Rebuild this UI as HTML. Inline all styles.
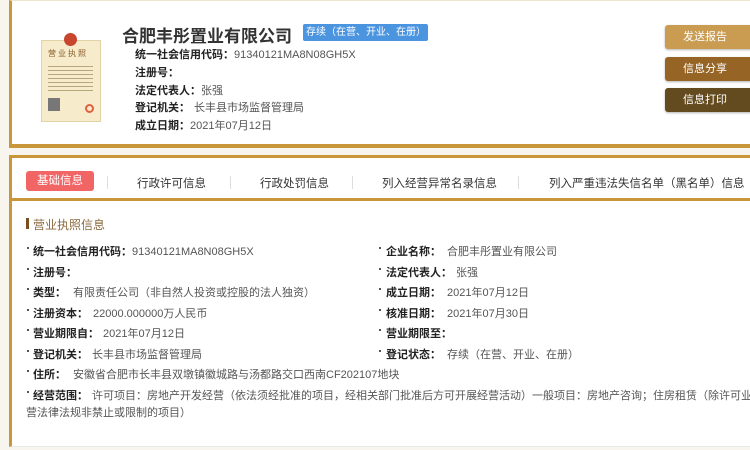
<!DOCTYPE html>
<html><head><meta charset="utf-8"><style>
*{margin:0;padding:0;box-sizing:border-box}
body{width:750px;height:450px;overflow:hidden;background:#f8f5ee;font-family:"Liberation Sans","Noto Sans CJK SC",sans-serif;font-size:11px;color:#333;position:relative}
.wrap{position:absolute;left:0;top:0;width:750px;height:450px;overflow:hidden}
.a{position:absolute;white-space:nowrap}
.card1{position:absolute;left:9px;top:0;width:745px;height:148px;background:#fff;border-left:3px solid #c9973a;border-bottom:4px solid #c9973a;border-top:1px solid #eee3cc}
.card2{position:absolute;left:9px;top:155px;width:745px;height:292px;background:#fff;border-left:3px solid #c9973a;border-top:3px solid #c9973a;border-bottom:1px solid #e8e8e8}
.tabline{position:absolute;left:12px;top:198px;width:740px;height:3px;background:#c9973a}
b{font-weight:bold;color:#222}
.v{color:#555}
.btn{position:absolute;left:665px;width:90px;height:24px;border-radius:3px;color:#fff;font-size:11px;line-height:24px;padding-left:18px;box-shadow:0 1px 2px rgba(0,0,0,.3)}
.sep{position:absolute;top:176px;width:1px;height:13px;background:#ddd}
.dot{position:absolute;width:2px;height:2px;background:#555}
.tab{font-size:11.5px;color:#333}
</style></head><body><div class="wrap">
<div class="card1"></div>
<div class="a" style="left:41px;top:40px;width:60px;height:82px;background:#f6eccb;border:1px solid #e2d3a6"></div>
<div class="a" style="left:64px;top:33px;width:13px;height:13px;border-radius:50%;background:#c8462e"></div>
<div class="a" style="left:48px;top:48px;font-size:8px;color:#8a5a2a;letter-spacing:2px">营业执照</div>
<div class="a" style="left:48px;top:64px;width:45px;height:28px;background:repeating-linear-gradient(#f6eccb 0 2px,#b8a77a 2px 3px,#f6eccb 3px 4px)"></div>
<div class="a" style="left:48px;top:98px;width:12px;height:13px;background:#777"></div>
<div class="a" style="left:85px;top:104px;width:9px;height:9px;border-radius:50%;border:2px solid #e06040"></div>

<div class="a" style="left:122px;top:22px;font-size:17px;font-weight:bold;color:#333">合肥丰彤置业有限公司</div>
<div class="a" style="left:303px;top:24px;width:125px;height:17px;background:#4a94e0;border-radius:2px;color:#fff;font-size:10px;line-height:17px;padding-left:3px">存续（在营、开业、在册）</div>
<div class="a" style="left:135px;top:46px"><b>统一社会信用代码：</b><span class="v">91340121MA8N08GH5X</span></div>
<div class="a" style="left:135px;top:64px"><b>注册号：</b></div>
<div class="a" style="left:135px;top:82px"><b>法定代表人：</b><span class="v">张强</span></div>
<div class="a" style="left:135px;top:99px"><b>登记机关：</b><span class="v" style="margin-left:4px">长丰县市场监督管理局</span></div>
<div class="a" style="left:135px;top:117px"><b>成立日期：</b><span class="v">2021年07月12日</span></div>
<div class="btn" style="top:25px;background:#c99c52">发送报告</div>
<div class="btn" style="top:57px;background:#966526">信息分享</div>
<div class="btn" style="top:88px;background:#634b1f">信息打印</div>

<div class="card2"></div>
<div class="tabline"></div>
<div class="a" style="left:26px;top:171px;width:68px;height:20px;background:#f26565;border-radius:3px;color:#fff;line-height:20px;text-align:center;font-size:11.5px">基础信息</div>
<div class="sep" style="left:107px"></div>
<div class="a tab" style="left:137px;top:175px">行政许可信息</div>
<div class="sep" style="left:230px"></div>
<div class="a tab" style="left:260px;top:175px">行政处罚信息</div>
<div class="sep" style="left:352px"></div>
<div class="a tab" style="left:382px;top:175px">列入经营异常名录信息</div>
<div class="sep" style="left:518px"></div>
<div class="a tab" style="left:549px;top:175px">列入严重违法失信名单（黑名单）信息</div>

<div class="a" style="left:26px;top:218px;width:3px;height:11px;background:#7a4f1e"></div>
<div class="a" style="left:33px;top:216px;color:#8b6a3e;font-size:12px">营业执照信息</div>

<div class="dot" style="left:27px;top:247px"></div><div class="a" style="left:33px;top:243px"><b>统一社会信用代码：</b><span class="v">91340121MA8N08GH5X</span></div>
<div class="dot" style="left:27px;top:268px"></div><div class="a" style="left:33px;top:264px"><b>注册号：</b></div>
<div class="dot" style="left:27px;top:288px"></div><div class="a" style="left:33px;top:284px"><b>类型：</b><span class="v" style="margin-left:7px">有限责任公司（非自然人投资或控股的法人独资）</span></div>
<div class="dot" style="left:27px;top:309px"></div><div class="a" style="left:33px;top:305px"><b>注册资本：</b><span class="v" style="margin-left:5px">22000.000000万人民币</span></div>
<div class="dot" style="left:27px;top:329px"></div><div class="a" style="left:33px;top:325px"><b>营业期限自：</b><span class="v" style="margin-left:4px">2021年07月12日</span></div>
<div class="dot" style="left:27px;top:350px"></div><div class="a" style="left:33px;top:346px"><b>登记机关：</b><span class="v" style="margin-left:4px">长丰县市场监督管理局</span></div>
<div class="dot" style="left:27px;top:370px"></div><div class="a" style="left:33px;top:366px"><b>住所：</b><span class="v" style="margin-left:7px">安徽省合肥市长丰县双墩镇徽城路与汤都路交口西南CF202107地块</span></div>
<div class="dot" style="left:27px;top:391px"></div><div class="a" style="left:33px;top:387px"><b>经营范围：</b><span class="v" style="margin-left:4px">许可项目：房地产开发经营（依法须经批准的项目，经相关部门批准后方可开展经营活动）一般项目：房地产咨询；住房租赁（除许可业务外，可自主依法经</span></div>
<div class="a" style="left:26px;top:404px"><span class="v">营法律法规非禁止或限制的项目）</span></div>

<div class="dot" style="left:379px;top:247px"></div><div class="a" style="left:386px;top:243px"><b>企业名称：</b><span class="v" style="margin-left:6px">合肥丰彤置业有限公司</span></div>
<div class="dot" style="left:379px;top:268px"></div><div class="a" style="left:386px;top:264px"><b>法定代表人：</b><span class="v" style="margin-left:4px">张强</span></div>
<div class="dot" style="left:379px;top:288px"></div><div class="a" style="left:386px;top:284px"><b>成立日期：</b><span class="v" style="margin-left:6px">2021年07月12日</span></div>
<div class="dot" style="left:379px;top:309px"></div><div class="a" style="left:386px;top:305px"><b>核准日期：</b><span class="v" style="margin-left:6px">2021年07月30日</span></div>
<div class="dot" style="left:379px;top:329px"></div><div class="a" style="left:386px;top:325px"><b>营业期限至：</b></div>
<div class="dot" style="left:379px;top:350px"></div><div class="a" style="left:386px;top:346px"><b>登记状态：</b><span class="v" style="margin-left:6px">存续（在营、开业、在册）</span></div>
</div></body></html>
